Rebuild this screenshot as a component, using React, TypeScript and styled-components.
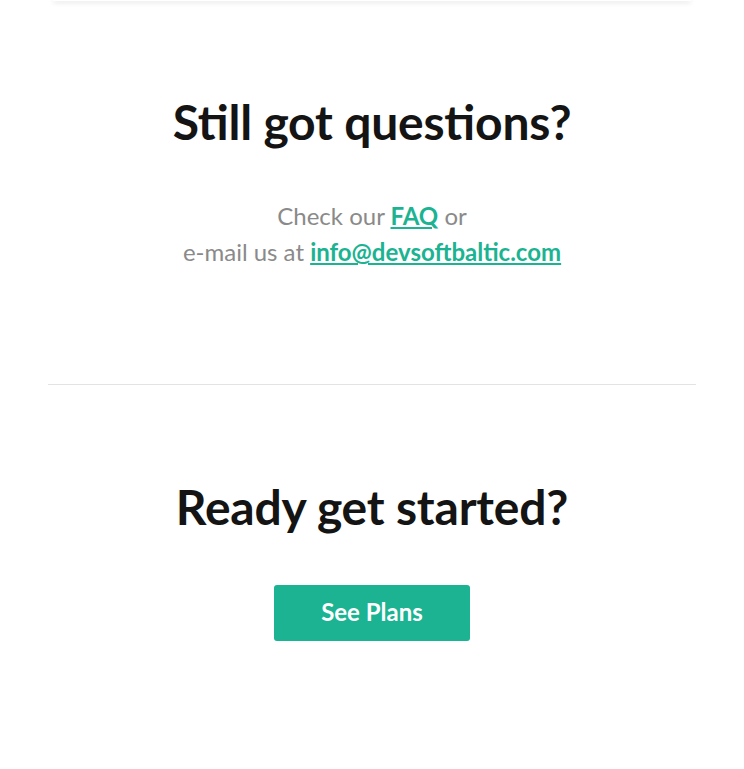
import styled, { createGlobalStyle } from 'styled-components';

const GlobalStyle = createGlobalStyle`
    html, body {
        margin: 0;
        padding: 0;
        background: #ffffff;
        font-family: Lato, "Open Sans", sans-serif;
    }
`;

const Page = styled.div`
    width: 648px;
    margin: 0 auto;
    display: flex;
    flex-direction: column;
    align-items: center;
`;

const CardEdge = styled.div`
    align-self: stretch;
    margin: 0 5px;
    height: 1px;
    border-radius: 0 0 6px 6px;
    background: #fff;
    box-shadow: 0 1px 5px rgba(0, 0, 0, 0.3);
`;

const Section = styled.section<{ $top: number; $bottom: number }>`
    align-self: stretch;
    display: flex;
    flex-direction: column;
    align-items: center;
    text-align: center;
    padding: ${(p) => `${p.$top}px 0 ${p.$bottom}px`};
`;

const Heading = styled.h2<{ $ti?: boolean }>`
    margin: 0;
    font-size: 48px;
    line-height: 56px;
    font-weight: 700;
    color: #141414;
    letter-spacing: -0.2px;
    font-feature-settings: ${(p) => (p.$ti ? '"liga" 1, "dlig" 1' : 'normal')};
`;

const Text = styled.p`
    margin: 48px 0 0;
    font-size: 24px;
    line-height: 36px;
    color: #8a8a8a;
`;

const TextLink = styled.a`
    color: #1bb391;
    font-weight: 700;
    text-decoration: underline;
    text-decoration-thickness: 2px;
    text-underline-offset: 2px;
`;

const Divider = styled.hr`
    align-self: stretch;
    margin: 0;
    border: none;
    border-top: 1px solid #e3e3e3;
`;

const Button = styled.button`
    margin-top: 50px;
    width: 196px;
    height: 56px;
    padding: 0 0 3px;
    border: none;
    border-radius: 3px;
    background: #1bb391;
    color: #ffffff;
    font-family: Lato, sans-serif;
    font-size: 24px;
    font-weight: 700;
    cursor: pointer;
`;

export default function App() {
    return (
        <>
            <GlobalStyle />
            <Page>
                <CardEdge />
                <Section $top={93} $bottom={114}>
                    <Heading $ti>Still got questions?</Heading>
                    <Text>
                        Check our <TextLink href="#">FAQ</TextLink> or
                        <br />
                        e-mail us at <TextLink href="#">info@devsoftbaltic.com</TextLink>
                    </Text>
                </Section>
                <Divider />
                <Section $top={94} $bottom={128}>
                    <Heading>Ready get started?</Heading>
                    <Button>See Plans</Button>
                </Section>
            </Page>
        </>
    );
}
